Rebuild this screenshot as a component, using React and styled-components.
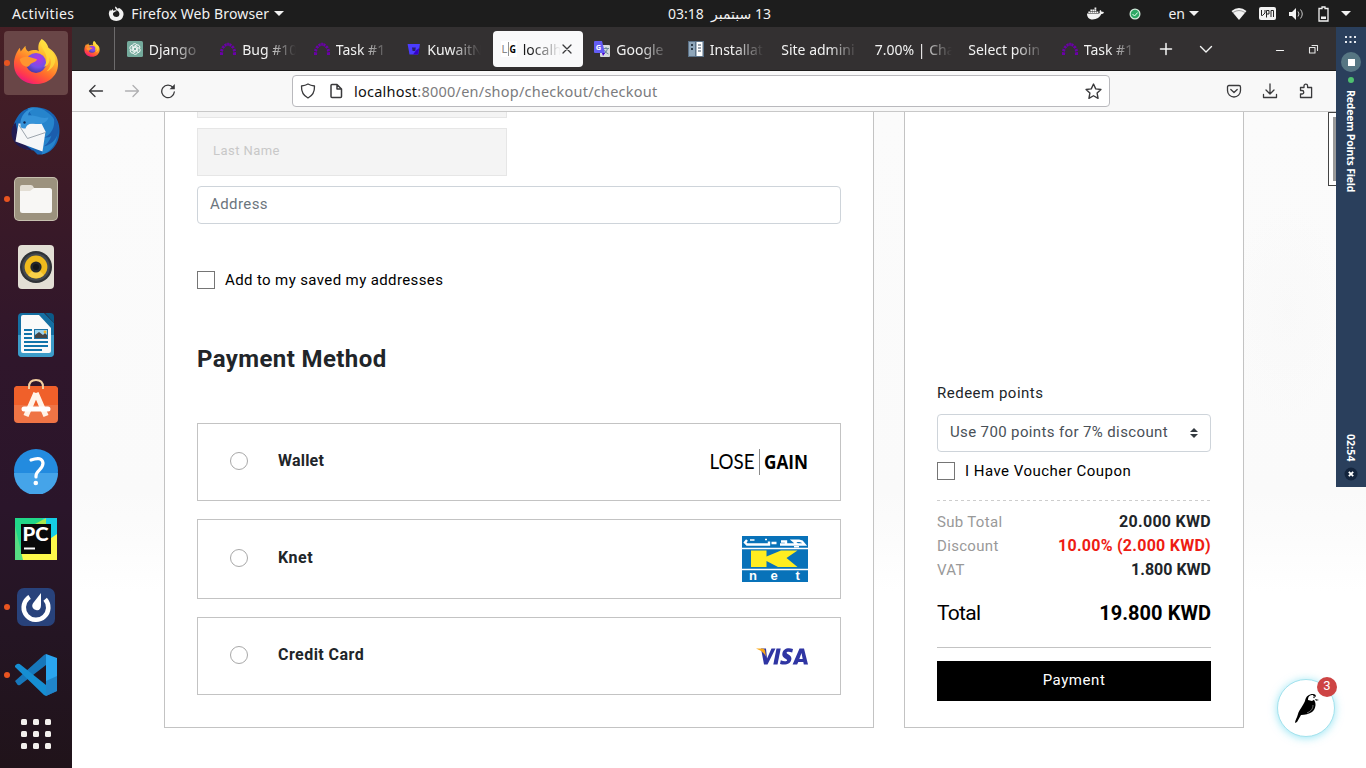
import React from "react";
import styled, { createGlobalStyle, css } from "styled-components";
import { FaDocker } from "react-icons/fa";

const GlobalStyle = createGlobalStyle`
  *, *::before, *::after { box-sizing: border-box; }
  body { margin: 0; background: #fff; overflow: hidden; }
`;

const uiFont = css`font-family: "Noto Sans", "Open Sans", "DejaVu Sans", sans-serif;`;

const Desktop = styled.div`
  position: relative;
  display: grid;
  grid-template-rows: 27px 741px;
  width: 1366px;
  height: 768px;
  overflow: hidden;
  ${uiFont}
`;

/* ---------- system bar ---------- */
const SystemBar = styled.header`
  display: grid;
  grid-template-columns: 1fr auto 1fr;
  align-items: center;
  background: #1d1d1d;
  color: #f2f2f2;
  font-size: 14px;
  line-height: 27px;
  white-space: nowrap;
`;
const BarGroup = styled.div`
  display: flex;
  align-items: center;
  height: 27px;
`;
const BarText = styled.span`
  margin-left: ${(p) => p.$left || 0}px;
  letter-spacing: ${(p) => p.$track || 0}px;
`;
const Caret = styled.i`
  margin-left: ${(p) => p.$left}px;
  border: 5px solid transparent;
  border-top-color: #f2f2f2;
  border-bottom: 0;
`;
const Clock = styled.time`
  direction: rtl;
  white-space: pre;
  font-family: "Noto Sans", "DejaVu Sans", sans-serif;
  margin-left: 73px;
`;
const Tray = styled.div`
  display: flex;
  align-items: center;
  justify-content: flex-end;
  height: 27px;
  padding-right: 15px;
`;
const Icon = styled.svg`
  display: block;
  flex: none;
  margin-left: ${(p) => p.$left || 0}px;
`;

/* ---------- dock ---------- */
const Workspace = styled.div`
  display: grid;
  grid-template-columns: 72px 1294px;
  min-height: 0;
`;
const Dock = styled.nav`
  display: flex;
  flex-direction: column;
  align-items: center;
  gap: 4px;
  padding-top: 4px;
  background: linear-gradient(#471f25 0%, #3b1a27 22%, #2f162b 45%, #2a152a 65%, #241523 82%, #20131a 100%);
`;
const DockItem = styled.div`
  position: relative;
  display: flex;
  align-items: center;
  justify-content: center;
  flex: none;
  width: 64px;
  height: ${(p) => (p.$short ? 46 : 64)}px;
  padding-bottom: ${(p) => p.$lift || 0}px;
  border-radius: 4px;
  background: ${(p) => (p.$active ? "#694647" : "transparent")};
`;
const RunningDot = styled.i`
  position: absolute;
  left: 0;
  top: 29px;
  width: 6px;
  height: 6px;
  border-radius: 50%;
  background: #e95420;
`;

/* ---------- browser ---------- */
const Browser = styled.section`
  display: grid;
  grid-template-rows: 44px 41px 656px;
  min-width: 0;
`;
const TabStrip = styled.div`
  display: flex;
  align-items: center;
  background: #333031;
  border-bottom: 1px solid #1c1b1b;
  color: #f0f0f0;
`;
const PinnedTab = styled.div`
  display: flex;
  align-items: center;
  justify-content: center;
  width: 43px;
  height: 43px;
  border-right: 1px solid #6d6b6c;
  padding-right: 2px;
  margin-right: 2px;
`;
const Tab = styled.div`
  display: flex;
  align-items: center;
  width: 90px;
  height: 36px;
  margin: 0 1.75px;
  padding-left: 8px;
  border-radius: 4px;
  background: ${(p) => (p.$active ? "#f9f9fa" : "transparent")};
  color: ${(p) => (p.$active ? "#1a1a1a" : "#f2f2f2")};
`;
const TabTitle = styled.span`
  width: ${(p) => p.$width}px;
  margin-left: ${(p) => (p.$icon ? 6 : 0)}px;
  padding-top: 2px;
  overflow: hidden;
  white-space: nowrap;
  font-size: 14px;
  line-height: 20px;
  mask-image: linear-gradient(to right, #000 ${(p) => p.$width - 30}px, transparent);
`;

const Toolbar = styled.div`
  display: flex;
  align-items: center;
  background: #f8f8f8;
  border-bottom: 1px solid #c8c8c8;
  padding-left: 16px;
`;
const AddressBar = styled.div`
  display: flex;
  align-items: center;
  width: 818px;
  height: 32px;
  margin-left: 116px;
  padding-left: 7px;
  border: 1px solid #b9b9bd;
  border-radius: 4px;
  background: #fff;
`;
const Url = styled.span`
  width: 743px;
  margin-left: 10px;
  padding-bottom: 1px;
  font-size: 14.5px;
  letter-spacing: 0.23px;
  line-height: 20px;
  color: #7b7b7d;
  b { font-weight: 400; color: #111; }
`;

/* ---------- page ---------- */
const Viewport = styled.main`
  position: relative;
  display: flex;
  align-items: flex-start;
  gap: 30px;
  padding-left: 92px;
  overflow: hidden;
  font-family: Roboto, "Liberation Sans", sans-serif;
  background:
    radial-gradient(ellipse 60px 110px at 1215px 200px, rgba(240, 240, 240, 0.16), transparent),
    linear-gradient(#fbfbfb 0, #fafafa 380px, #fcfcfc 430px, #fff 480px);
`;
const Card = styled.section`
  flex: none;
  width: ${(p) => p.$width}px;
  height: 616px;
  padding: 0 32px;
  background: #fff;
  border: 1px solid #c3c3c3;
  border-top: 0;
`;
const FlatField = styled.div`
  width: 310px;
  height: ${(p) => (p.$cut ? 6 : 48)}px;
  margin-bottom: 10px;
  padding-left: 15px;
  background: #f4f4f4;
  border: 1px solid #e6e6e6;
  ${(p) => p.$cut && "border-top: 0;"}
  color: #c8c8c8;
  font-size: 13px;
  letter-spacing: 0.45px;
  line-height: 44px;
`;
const Field = styled.div`
  display: flex;
  justify-content: space-between;
  height: 38px;
  padding: 0 12px;
  border: 1px solid #ced4da;
  border-radius: 4px;
  background: #fff;
  color: ${(p) => (p.$filled ? "#495057" : "#6c757d")};
  font-size: 15px;
  letter-spacing: ${(p) => p.$track}px;
  line-height: 34px;
`;
const SelectArrows = styled.svg`
  align-self: center;
`;
const Check = styled.label`
  display: flex;
  align-items: center;
  gap: 10px;
  height: 18px;
  margin-top: ${(p) => p.$top}px;
  color: #000;
  font-size: 15px;
  letter-spacing: ${(p) => p.$track}px;
  white-space: nowrap;
  &::before {
    content: "";
    width: 18px;
    height: 18px;
    border: 1px solid #757575;
    background: #fff;
  }
`;
const Heading = styled.h2`
  margin: 54px 0 47px;
  color: #212529;
  font-size: 24px;
  font-weight: 700;
  letter-spacing: 0.4px;
  line-height: 33px;
`;
const Method = styled.div`
  display: flex;
  align-items: center;
  height: ${(p) => p.$height || 78}px;
  margin-bottom: 18px;
  padding: 0 32px;
  border: 1px solid #c3c3c3;
`;
const Radio = styled.i`
  width: 18px;
  height: 18px;
  margin: 0 30px 2px 0;
  border: 1px solid #a8a8a8;
  border-radius: 50%;
`;
const MethodName = styled.strong`
  flex: 1;
  color: #212529;
  font-size: 16px;
  line-height: 20px;
  letter-spacing: ${(p) => p.$track || 0.2}px;
  padding-bottom: 3px;
`;
const Label = styled.div`
  margin-top: 269px;
  height: 33px;
  color: #212529;
  font-size: 15px;
  letter-spacing: 0.5px;
  line-height: 24px;
`;
const Divider = styled.hr`
  height: 1px;
  margin: 20px 0 9px;
  border: 0;
  background: repeating-linear-gradient(to right, #cdcdcd 0 3px, transparent 3px 6px);
`;
const Row = styled.div`
  display: flex;
  justify-content: space-between;
  height: 24px;
  line-height: 24px;
  color: #999;
  font-size: 15px;
  letter-spacing: 0.32px;
`;
const Amount = styled.strong`
  color: ${(p) => (p.$red ? "#ee1c13" : "#212529")};
  font-size: 16px;
  letter-spacing: ${(p) => p.$track || 0}px;
`;
const Total = styled.div`
  display: flex;
  justify-content: space-between;
  height: 66px;
  padding-top: 16px;
  border-bottom: 1px solid #c3c3c3;
  color: #000;
  font-size: 21px;
  letter-spacing: -0.7px;
  line-height: 31px;
  strong { font-size: 20px; letter-spacing: 0.05px; }
`;
const PayButton = styled.button`
  display: block;
  width: 100%;
  height: 40px;
  margin-top: 13px;
  padding: 0 0 3px;
  border: 0;
  background: #000;
  color: #fff;
  font: 15px Roboto, sans-serif;
  letter-spacing: 0.55px;
`;

/* ---------- overlays ---------- */
const ScrollThumb = styled.div`
  position: absolute;
  right: 30px;
  top: 0;
  width: 8px;
  height: 74px;
  border: 1px solid #444;
  border-right: 0;
  padding: 4px 0 4px 4px;
  background: #fff;
  &::before { content: ""; display: block; height: 64px; background: #999; }
`;
const ChatBubble = styled.div`
  position: absolute;
  left: 1205px;
  top: 567px;
  display: flex;
  align-items: center;
  justify-content: center;
  width: 58px;
  height: 58px;
  border: 1px solid #a3e2ed;
  border-radius: 50%;
  background: #fff;
  box-shadow: 0 1px 8px rgba(80, 210, 235, 0.6);
`;
const Badge = styled.span`
  position: absolute;
  right: -3px;
  top: -3px;
  width: 20px;
  height: 20px;
  border-radius: 50%;
  background: #cd4444;
  color: #fff;
  font-size: 13px;
  line-height: 18px;
  text-align: center;
`;
const Tracker = styled.aside`
  position: absolute;
  right: 0;
  top: 27px;
  display: flex;
  flex-direction: column;
  align-items: center;
  width: 30px;
  height: 460px;
  padding-top: 9px;
  background: #2a3f5c;
  color: #fff;
`;
const StopButton = styled.i`
  display: flex;
  align-items: center;
  justify-content: center;
  width: 20px;
  height: 20px;
  margin-top: 8px;
  border-radius: 50%;
  background: #567683;
  &::before { content: ""; width: 7px; height: 7px; background: #fff; }
`;
const OnlineDot = styled.i`
  width: 6px;
  height: 6px;
  margin-top: 5px;
  border-radius: 50%;
  background: #4fc070;
`;
const Vertical = styled.span`
  writing-mode: vertical-rl;
  height: ${(p) => p.$height}px;
  margin-top: ${(p) => p.$top}px;
  font: 700 10.5px/14px "Open Sans", sans-serif;
  letter-spacing: ${(p) => p.$track}px;
  white-space: nowrap;
`;

/* ---------- drawings ---------- */
const Firefox = ({ size, id }) => (
  <Icon width={size} height={size} viewBox="0 0 46 48">
    <defs>
      <linearGradient id={id + "a"} x1="0.8" y1="0" x2="0.25" y2="1">
        <stop offset="0" stopColor="#fff44f" /><stop offset="0.35" stopColor="#ffb32c" />
        <stop offset="0.65" stopColor="#ff6a2c" /><stop offset="0.85" stopColor="#ff3750" /><stop offset="1" stopColor="#e8128a" />
      </linearGradient>
      <radialGradient id={id + "b"} cx="0.6" cy="0.3" r="0.7">
        <stop offset="0" stopColor="#b833e1" /><stop offset="0.6" stopColor="#7550e8" /><stop offset="1" stopColor="#4b3aa8" />
      </radialGradient>
    </defs>
    <path d="M29 0c3 2 6 5 7 9 6 4 10 9 10 17 0 13-11 21-23 21S0 39 0 26c0-7 3-13 6-17l1 4 5-6c0 3 1 5 3 6 5-2 9-2 11 0-1-4-1-9 3-13z" fill={`url(#${id}a)`} />
    <circle cx="23" cy="25" r="10.5" fill={`url(#${id}b)`} />
    <path d="M6 21c3-2 7-3 11-2l7 2c0 2-3 3-5 4-3 1-2 4-6 4-4-1-6-4-7-8z" fill="#ff9430" />
    <path d="M29 0c-4 8 5 12 5 20 0 4-1 7-3 9 5-1 7-6 6-10 3 5 1 11-3 15 5-2 10-8 9-14-1-5-4-7-6-9-2-2-6-5-8-11z" fill="#ffdc3c" opacity="0.8" />
  </Icon>
);
const Thunderbird = () => (
  <Icon width="50" height="50" viewBox="0.5 -0.5 50 50">
    <path d="M3 19C7 6 15 0 26 1c14 0 23 10 23 23 0 14-9 25-22 24l-4-4-6-1C6 40-1 32 3 19z" fill="#1766b5" />
    <path d="M17 2c5-2 13-2 20 4 9 6 12 16 9 26-2 9-9 15-15 16 1-3 2-5 1-7l-5 2c4-6 4-11 4-17z" fill="#2684cc" />
    <path d="M1 26c0-5 2-8 4-10l4 18 13 10C9 43 1 36 1 26z" fill="#211b52" />
    <path d="M8 17l23 0 4 8-3 20L5 35z" fill="#f5f6f8" />
    <path d="M8 18l9 14 18-6" fill="none" stroke="#9ca4ad" />
    <path d="M10 20c-1-11 6-18 14-18-5 2-7 5-6 7 7-1 12 4 20 2-1 4-6 8-15 6-5 0-7 2-8 5-2 0-4 0-5-2z" fill="#3593d9" />
    <circle cx="14" cy="16" r="1.200" fill="#10264f" />
    <path d="M42 7c4 9 1 20-8 24 3 0 5 0 7-2-2 6-5 9-8 11 10-2 16-11 15-20-1-5-3-10-6-13z" fill="#1b5dad" />
  </Icon>
);
const Files = () => (
  <Icon width="46" height="46" viewBox="0 0 46 46">
    <rect x="1" y="1" width="44" height="44" rx="5" fill="#c7c0af" />
    <rect x="2" y="2" width="42" height="42" rx="4" fill="#9c927e" />
    <rect x="7" y="12" width="32" height="25" rx="2.500" fill="#f8f7f5" />
    <path d="M7 15V11q0-2 2-2h9q2 0 3 3l-4 3z" fill="#e3ded4" />
  </Icon>
);
const Speaker = () => (
  <Icon width="38" height="46" viewBox="0 0 38 46">
    <rect x="1" y="1" width="36" height="44" rx="4" fill="#e3dfd5" />
    <circle cx="19" cy="23" r="16" fill="#2f3236" />
    <circle cx="19" cy="23" r="13.800" fill="#454a50" />
    <circle cx="19" cy="23" r="11.400" fill="#f0bb1d" />
    <path d="M19 23l-8 8a11.400 11.400 0 0 0 16 0z" fill="#f9d049" />
    <circle cx="19" cy="23" r="5.600" fill="#25282c" />
    <circle cx="19" cy="23" r="3" fill="#151719" />
  </Icon>
);
const Writer = () => (
  <Icon width="38" height="46" viewBox="0 0 38 46">
    <path d="M5 1h22l10 10v30q0 4-4 4H5q-4 0-4-4V5q0-4 4-4z" fill="#156fa2" />
    <path d="M1 23h36v18q0 4-4 4H5q-4 0-4-4z" fill="#3c9cc9" />
    <path d="M28 1h5q4 0 4 4v6z" fill="#0b5987" />
    <path d="M6 3h16l12 13v23q0 2-2 2H6q-2 0-2-2V5q0-2 2-2z" fill="#fafafa" />
    <path d="M7 18h8M7 22h8M7 26h8M7 30h24M7 34h24M7 38h18" stroke="#1274aa" strokeWidth="1.900" />
    <rect x="17" y="17" width="14" height="10" fill="#1e73a5" />
    <rect x="18" y="18" width="12" height="8" fill="#9bd4f0" />
    <path d="M18 26v-3l4-3 4 3 2-2 2 2v3z" fill="#454545" /><circle cx="28" cy="20" r="1.400" fill="#f6b324" />
  </Icon>
);
const Software = () => (
  <Icon width="46" height="46" viewBox="0 0 46 46">
    <rect x="1" y="8" width="44" height="37" rx="4" fill="#ef7445" />
    <path d="M5 8h36q4 0 4 4v15H1V12q0-4 4-4z" fill="#f0602a" />
    <path d="M16 11V9q0-7 7-7t7 7v2" fill="none" stroke="#f3cf9f" strokeWidth="2" />
    <path d="M23 15L13 38M23 15l10 23" stroke="#fff3e8" strokeWidth="5.400" />
    <path d="M11 31h24" stroke="#fff" strokeWidth="5" strokeLinecap="round" />
  </Icon>
);
const Help = () => (
  <Icon width="46" height="46" viewBox="0 0 46 46">
    <circle cx="23" cy="23" r="22" fill="#238bdf" />
    <path d="M1 25a22 22 0 0 0 44 0z" fill="#45a4e9" />
    <path d="M18 12q11-4 12 3c0 7-7 7-7 13v1" fill="none" stroke="#fff" strokeWidth="3.200" strokeLinecap="round" />
    <circle cx="22.800" cy="35" r="2.300" fill="#fff" />
  </Icon>
);
const PyCharm = () => (
  <Icon width="42" height="42" viewBox="0 0 42 42">
    <rect width="42" height="42" fill="#21d789" />
    <path d="M28 0h14v26L24 10z" fill="#15cde5" /><path d="M20 6L31 0v8z" fill="#a9e84f" />
    <path d="M42 16v26H5L0 37l20-6z" fill="#fcf84a" /><path d="M0 8l8 34H0z" fill="#56dc82" />
    <rect x="6" y="6" width="30" height="30" fill="#090909" />
    <text x="7.500" y="22.500" fill="#fff" fontFamily="Lato" fontWeight="900" fontSize="19" textLength="26" lengthAdjust="spacingAndGlyphs">PC</text>
    <path d="M9 30.500h11" stroke="#fff" strokeWidth="2" />
  </Icon>
);
const Mattermost = () => (
  <Icon width="40" height="40" viewBox="0 0 40 40">
    <rect x="1" y="1" width="38" height="38" rx="7" fill="#28427b" />
    <circle cx="20" cy="20.500" r="12.300" fill="none" stroke="#fff" strokeWidth="4.600" strokeDasharray="60 17.300" transform="rotate(-42 20 20.500)" />
    <path d="M25 6v12c0 4-2 6-5 5-4-1-5-5-2-8z" fill="#fff" />
  </Icon>
);
const Code = () => (
  <Icon width="42" height="42" viewBox="0 0 42 42">
    <path d="M0 27L29 1l2-1v11L5 31q-2 1-3-1z" fill="#1777bb" />
    <path d="M0 13q-1-1 2-3 2-1 4 1l25 20v11l-2-1z" fill="#168ed2" />
    <path d="M31 0l11 4v33l-11 5z" fill="#2aa5f0" />
    <path d="M31 27l11-5v15l-11 5z" fill="#1a6fb0" opacity="0.600" />
  </Icon>
);
const AppGrid = () => (
  <Icon width="30" height="30" viewBox="0 0 30 30" fill="#f3f0ed">
    {[0, 12, 24].map((y) => [0, 12, 24].map((x) => <rect key={`${x}-${y}`} x={x} y={y} width="6" height="6" rx="1.500" />))}
  </Icon>
);

const Knot = () => (
  <Icon width="16" height="16" viewBox="0 0 16 16">
    <rect width="16" height="16" rx="1.500" fill="#74aa9c" />
    <g fill="none" stroke="#fff" strokeWidth="0.850">
      {[0, 60, 120, 180, 240, 300].map((a) => (
        <path key={a} transform={`rotate(${a} 8 8)`} d="M5.300 4.600a2.500 2.500 0 0 1 4.500-.9M5.300 4.600v3.800l2.700 1.500" />
      ))}
    </g>
  </Icon>
);
const Arch = () => (
  <Icon width="16" height="16" viewBox="0 0 16 16" fill="#6a00a8">
    <path d="M0 11l3.200.5-.2 2.500H0zM.6 7.500l3 1.200-.8 2-2.700-1zM3 4.200l2.200 2-1.600 1.600L1.300 6.300zM6.500 2l.3 2.900-1.500.9L3.900 3.400zM9.500 2l2.500 1.200-1.300 2.500-1.600-.7zM13 4.200l1.800 2.100-2.400 1.500L10.900 6.200zM15.300 7.500l.7 2.200-2.700 1-.8-2zM16 11l-3.200.5.2 2.500H16zM7.200 1.800h1.700v2.900H7.200z" />
  </Icon>
);
const Bucket = () => (
  <Icon width="14" height="16" viewBox="0 0 14 16">
    <path d="M.6 3h12.400l-1.800 10.500H2.500z" fill="#4b3cff" /><path d="M9 9.500l3.200-2.500-1.100 6.500H6z" fill="#3500c8" /><path d="M5 6.500h3.800l-.6 3.500H5.600z" fill="#2a1f6a" />
  </Icon>
);
const SiteMark = () => (
  <Icon width="16" height="16" viewBox="0 0 16 16">
    <rect width="16" height="16" fill="#fff" />
    <text x="0.500" y="12" fontFamily="Lato" fontSize="11" fill="#888">L</text>
    <path d="M7.500 1v14" stroke="#777" strokeWidth="0.800" />
    <text x="8.500" y="12" fontFamily="Open Sans" fontWeight="700" fontSize="10" textLength="6.500" lengthAdjust="spacingAndGlyphs">G</text>
  </Icon>
);
const Translate = () => (
  <Icon width="16" height="16" viewBox="0 0 16 16">
    <rect x="6" y="4" width="10" height="12" rx="1" fill="#d6dbdd" />
    <path d="M9 7.500h6M12 6v1.500M10 13q3-2 3.500-5.500M10.500 9q1 3 4 4" fill="none" stroke="#6c8b99" />
    <path d="M1 0h7l3 12H1q-1 0-1-1V1q0-1 1-1z" fill="#635df5" /><path d="M8 12h3l-2 3z" fill="#4a00d0" />
    <text x="1.800" y="8.500" fontFamily="Open Sans" fontWeight="700" fontSize="7.500" fill="#fff">G</text>
  </Icon>
);
const Racks = () => (
  <Icon width="16" height="16" viewBox="0 0 16 16">
    <rect width="16" height="16" fill="#5b7187" /><rect x="1" y="1" width="6" height="14" fill="#8fa6ba" /><rect x="8.500" y="1" width="6" height="14" fill="#fff" />
    <path d="M3 4h2M3 8h2" stroke="#2d3b49" strokeWidth="2" /><path d="M10 4h3M10 7h3M10 10h3" stroke="#34495e" />
  </Icon>
);
const Line = ({ d, size = 16, color = "#3a3a3c", width = 1.3, left }) => (
  <Icon $left={left} width={size} height={size} viewBox="0 0 16 16" fill="none" stroke={color} strokeWidth={width} strokeLinecap="round" strokeLinejoin="round">
    <path d={d} />
  </Icon>
);
const Reload = () => (
  <Icon $left={20} width="16" height="16" viewBox="0 0 16 16">
    <path d="M13 4.500A6.300 6.300 0 1 0 14.300 9" fill="none" stroke="#3a3a3c" strokeWidth="1.300" strokeLinecap="round" />
    <path d="M14.800 1v5.200H9.600z" fill="#3a3a3c" />
  </Icon>
);

const LoseGain = () => (
  <Icon width="99" height="26" viewBox="0 0 99 26">
    <text x="0.500" y="20" fontFamily="Lato" fontSize="21.500" textLength="45" lengthAdjust="spacingAndGlyphs">LOSE</text>
    <path d="M50.500 0v26" stroke="#8a8a8a" />
    <text x="55" y="20" fontFamily="Open Sans" fontWeight="700" fontSize="20" textLength="44" lengthAdjust="spacingAndGlyphs">GAIN</text>
  </Icon>
);
const Knet = () => (
  <Icon width="66" height="46" viewBox="0 0 66 46">
    <rect width="66" height="46" fill="#0872b9" />
    <path d="M0 12.500h66M0 33.500h66" stroke="#fff" strokeWidth="1.300" />
    <path d="M5 4L3 6.500 5 8.500h22V5.500M29.500 7h5M38 8.500h12M39 5.500h5v3M50 8.500h12.500L60 5.500l-3-.8h-6l4 3.500" fill="none" stroke="#fff" strokeWidth="2.400" />
    <path d="M8 4h4.500M23 3.500h2M52 10.800h5" stroke="#fff" strokeWidth="1.400" />
    <path d="M9 14.500h15.500v6L39 14.500h16.500l-11 7.500 11 9H36l-11.500-6v6H9z" fill="#ffed20" />
    <g fill="#fff" fontFamily="Liberation Sans" fontWeight="700" fontSize="13">
      <text x="7" y="43.500">n</text><text x="28.500" y="43.500">e</text><text x="53.500" y="43.500">t</text>
    </g>
  </Icon>
);
const Visa = () => (
  <Icon width="52" height="17" viewBox="0 0 52 17">
    <g fill="#2f35a3">
      <path d="M5 .5h5l1 10L15.500.5h4L11.500 16.500H8z" /><path d="M20.500.5h4.200L21.500 16.500h-4.200z" />
      <path d="M37 1l-.8 3.500c-3-1-5.500-1-5.600.3 0 1.500 5.200 2 4.800 6.200-.5 5-6 6.500-11.400 4.900l.8-3.600c3 1.300 6.200 1.300 6.300-.1 0-1.700-5-2-4.800-6C26.700 1 31.500-.8 37 1z" />
      <path fillRule="evenodd" d="M43.500.5H48l4 16h-4.200l-.5-2.500h-5l-1.200 2.500h-4.500zM45.500 5l-2.200 6h3.400z" />
    </g>
    <path d="M0 .5h6.500q2 0 2.500 2l1 6Q7 3 0 .5z" fill="#f8a81b" />
  </Icon>
);
const Bird = () => (
  <Icon width="25" height="31" viewBox="0 0 25 31">
    <path d="M11 8c1-5 4-7 8-7 2 0 3 1 3 3-2-1-3 0-3 2 4 3 3 10-1 13-3 2-7 3-11 3l-4 7-2 1c0-3 2-5 3-9C5 17 9 13 11 8z" />
    <path d="M14 7c0-4 2-5 5-5l2 4-3 2z" fill="#fff" />
    <path d="M19 12c0 4-2 6-6 8" fill="none" stroke="#aaa" strokeWidth="0.700" /><path d="M21 6l4 1-3 .7z" /><circle cx="20" cy="4.500" r="0.700" />
  </Icon>
);

const dockItems = [
  { icon: <Firefox size={46} id="dock" />, active: true, running: true, lift: 2 },
  { icon: <Thunderbird /> },
  { icon: <Files />, running: true },
  { icon: <Speaker /> },
  { icon: <Writer /> },
  { icon: <Software />, lift: 5 },
  { icon: <Help /> },
  { icon: <PyCharm /> },
  { icon: <Mattermost />, running: true },
  { icon: <Code />, running: true },
  { icon: <AppGrid />, short: true },
];

const tabs = [
  { icon: <Knot />, title: "Django" },
  { icon: <Arch />, title: "Bug #10" },
  { icon: <Arch />, title: "Task #1" },
  { icon: <Bucket />, title: "KuwaitN" },
  { icon: <SiteMark />, title: "localh", active: true },
  { icon: <Translate />, title: "Google" },
  { icon: <Racks />, title: "Installat" },
  { title: "Site admini" },
  { title: "7.00% | Cha" },
  { title: "Select poin" },
  { icon: <Arch />, title: "Task #1" },
];

export default function App() {
  return (
    <Desktop>
      <GlobalStyle />
      <SystemBar>
        <BarGroup>
          <BarText $left={12} $track={0.4}>Activities</BarText>
          <Icon $left={34} width="16" height="16" viewBox="0 0 16 16">
            <path d="M7 .5C8.500 1 9.500 2 10 3.500c0-1 .5-1.500 1-1.500 3 1.500 5 4 4.500 7A7.400 7.400 0 0 1 1 9c-.5-2 .3-4 1.200-5.500l.6 1.500L5 3v1.800C7 4 8 4 9 5 7.500 5 7 6 6 6.300 4 7.500 5 11 8.500 11c3 0 4-3.500 1.500-6C8 4 7 2.500 7 .5z" fill="#f2f2f2" />
          </Icon>
          <BarText $left={7} $track={0.13}>Firefox Web Browser</BarText>
          <Caret $left={5} />
        </BarGroup>
        <Clock>13 سبتمبر  03:18</Clock>
        <Tray>
          <FaDocker size={17} />
          <Icon $left={25} width="12" height="12" viewBox="0 0 12 12">
            <circle cx="6" cy="6" r="5.500" fill="#d4eadc" /><circle cx="6" cy="6" r="4.300" fill="#2fa866" /><path d="M3.500 6l2 2 3.200-3.500" fill="none" stroke="#e9fff0" />
          </Icon>
          <BarText $left={27}>en</BarText>
          <Caret $left={4} />
          <Icon $left={32} width="16" height="14" viewBox="0 0 16 14">
            <path d="M.5 4Q8-2 15.500 4L8 13z" fill="#f2f2f2" /><path d="M2 5.500q6-4 12 0" fill="none" stroke="#777" strokeWidth="0.700" />
          </Icon>
          <Icon $left={12} width="17" height="13" viewBox="0 0 17 13">
            <rect width="17" height="13" rx="2" fill="#f2f2f2" />
            <path d="M2.500 3v5.500h1L6 6V3M7.500 10.500V3.500H10V7H7.500M12 10V3.500h2.500V10" fill="none" stroke="#222" />
          </Icon>
          <Icon $left={13} width="15" height="12" viewBox="0 0 15 12">
            <path d="M0 4h3l4-4v12L3 8H0z" fill="#f2f2f2" /><path d="M9 3.500q2 2.500 0 5M11.500 1.500q3.500 4.500 0 9" fill="none" stroke="#ccc" />
          </Icon>
          <Icon $left={14} width="11" height="16" viewBox="0 0 11 16">
            <path d="M4 1h3v1.500h3V15H1V2.500h3z" fill="none" stroke="#f2f2f2" strokeWidth="1.300" /><path d="M3 10.500h5V13H3z" fill="#f2f2f2" />
          </Icon>
          <Caret $left={12} />
        </Tray>
      </SystemBar>

      <Workspace>
        <Dock>
          {dockItems.map((item, i) => (
            <DockItem key={i} $active={item.active} $short={item.short} $lift={item.lift}>
              {item.running && <RunningDot />}
              {item.icon}
            </DockItem>
          ))}
        </Dock>

        <Browser>
          <TabStrip>
            <PinnedTab><Firefox size={16} id="pin" /></PinnedTab>
            {tabs.map((tab, i) => (
              <Tab key={i} $active={tab.active}>
                {tab.icon}
                <TabTitle $icon={!!tab.icon} $width={tab.active ? 38 : tab.icon ? 54 : 77}>{tab.title}</TabTitle>
                {tab.active && <Line d="M4 4l8 8M12 4l-8 8" left={-2} />}
              </Tab>
            ))}
            <Line d="M8 2.500v11M2.500 8h11" color="#f5f5f5" left={12} width={1.5} />
            <Line d="M2.500 5.500L8 11l5.500-5.500" color="#f5f5f5" left={24} width={1.4} />
            <Line d="M4.500 9.500h7" color="#f5f5f5" left={58} width={1.2} />
            <Line d="M4.500 6.500h5.500v5.500h-5.500zM7 4.500h5.500v5" color="#e5e5e5" left={17} width={1.1} />
          </TabStrip>

          <Toolbar>
            <Line d="M14.500 8H1.500M7 2.500L1.500 8 7 13.500" />
            <Line d="M1.500 8h13M9 2.500L14.500 8 9 13.500" left={20} color="#b0b0b2" />
            <Reload />
            <AddressBar>
              <Line d="M8 1c2 1.200 4 1.700 6.500 2 .2 5-1.500 9.500-6.500 12C3 12.500 1.300 8 1.500 3 4 2.700 6 2.200 8 1z" />
              <Line d="M3 2.500q0-1 1-1h5l4.500 4.500v7.500q0 1-1 1H4q-1 0-1-1zM9 1.500V6h4.500z" left={12} width={1.5} />
              <Url><b>localhost</b>:8000/en/shop/checkout/checkout</Url>
              <Line d="M8 1l2.100 4.500 4.900.6-3.600 3.400.9 4.900L8 12l-4.300 2.400.9-4.900L1 6.100l4.900-.6z" size={17} left={-12} />
            </AddressBar>
            <Line d="M3 2.500h10q1.500 0 1.500 1.500v3.500a6.500 6.500 0 0 1-13 0V4Q1.500 2.500 3 2.500zM4.800 6.500L8 9.500l3.200-3" left={116} />
            <Line d="M8 1v10M4 7l4 4 4-4M1.500 11.500v3h13v-3" left={20} />
            <Line d="M6 4.500V3a1.800 1.800 0 0 1 3.600 0v1.500h4v10H2.500V11H4a1.700 1.700 0 0 0 0-3.500H2.500v-3z" left={20} />
          </Toolbar>

          <Viewport>
            <Card $width={710}>
              <FlatField $cut />
              <FlatField>Last Name</FlatField>
              <Field $track={0.42}>Address</Field>
              <Check $top={47} $track={0.38}>Add to my saved my addresses</Check>
              <Heading>Payment Method</Heading>
              <Method><Radio /><MethodName>Wallet</MethodName><LoseGain /></Method>
              <Method $height={80}><Radio /><MethodName $track={0.5}>Knet</MethodName><Knet /></Method>
              <Method><Radio /><MethodName $track={0.45}>Credit Card</MethodName><Visa /></Method>
            </Card>
            <Card $width={340}>
              <Label>Redeem points</Label>
              <Field $filled $track={0.37}>
                Use 700 points for 7% discount
                <SelectArrows width="8" height="10" viewBox="0 0 8 10"><path d="M0 4l4-4 4 4zM0 6l4 4 4-4z" fill="#343a40" /></SelectArrows>
              </Field>
              <Check $top={10} $track={0.48}>I Have Voucher Coupon</Check>
              <Divider />
              <Row>Sub Total<Amount $track={0.28}>20.000 KWD</Amount></Row>
              <Row>Discount<Amount $red $track={0.26}>10.00% (2.000 KWD)</Amount></Row>
              <Row>VAT<Amount>1.800 KWD</Amount></Row>
              <Total>Total<strong>19.800 KWD</strong></Total>
              <PayButton>Payment</PayButton>
            </Card>
            <ScrollThumb />
            <ChatBubble><Bird /><Badge>3</Badge></ChatBubble>
          </Viewport>
        </Browser>
      </Workspace>

      <Tracker>
        <Icon width="12" height="8" viewBox="0 0 12 8" fill="#e6eaf0">
          {[0, 5].map((y) => [0, 4.5, 9].map((x) => <rect key={`${x}-${y}`} x={x} y={y} width="2" height="2" />))}
        </Icon>
        <StopButton />
        <OnlineDot />
        <Vertical $top={7} $height={102} $track={-0.2}>Redeem Points Field</Vertical>
        <Vertical $top={242} $height={30} $track={0.1}>02:54</Vertical>
        <Icon width="14" height="17" viewBox="0 -3 14 17">
          <circle cx="7" cy="7" r="6.500" fill="#13243d" />
          <path d="M4.800 4.800l4.400 4.400M9.200 4.800L4.800 9.200" stroke="#fff" strokeWidth="1.800" />
        </Icon>
      </Tracker>
    </Desktop>
  );
}
